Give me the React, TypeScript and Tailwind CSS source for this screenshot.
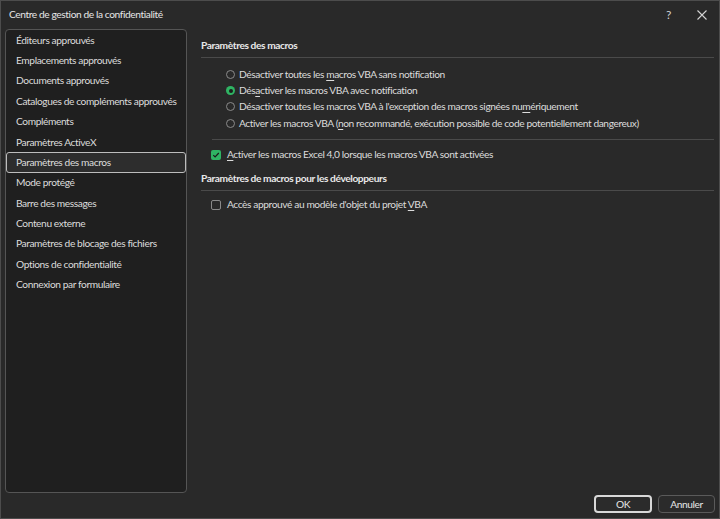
import React from "react";

const sections = [
  "Éditeurs approuvés",
  "Emplacements approuvés",
  "Documents approuvés",
  "Catalogues de compléments approuvés",
  "Compléments",
  "Paramètres ActiveX",
  "Paramètres des macros",
  "Mode protégé",
  "Barre des messages",
  "Contenu externe",
  "Paramètres de blocage des fichiers",
  "Options de confidentialité",
  "Connexion par formulaire",
];

const Radio: React.FC<{ checked?: boolean; children: React.ReactNode }> = ({ checked, children }) => (
  <div className="flex items-center h-[16.4px]">
    {checked ? (
      <span className="w-[9px] h-[9px] rounded-full bg-[#2fb463] flex items-center justify-center">
        <span className="w-[4px] h-[4px] rounded-full bg-[#1c1c1c]" />
      </span>
    ) : (
      <span className="w-[9px] h-[9px] rounded-full border border-[#8a8a8a]" />
    )}
    <span className="ml-[4px]">{children}</span>
  </div>
);

const Check: React.FC<{ checked?: boolean; children: React.ReactNode }> = ({ checked, children }) => (
  <div className="flex items-center h-[16px]">
    {checked ? (
      <span className="w-[10px] h-[10px] rounded-[2px] bg-[#2fb463] flex items-center justify-center">
        <svg width="8" height="8" viewBox="0 0 8 8" fill="none">
          <path d="M1.3 4.2 L3.1 6 L6.8 2" stroke="#1a1a1a" strokeWidth="1.2" />
        </svg>
      </span>
    ) : (
      <span className="w-[10px] h-[10px] rounded-[2px] border border-[#8a8a8a]" />
    )}
    <span className="ml-[6px]">{children}</span>
  </div>
);

const U: React.FC<{ children: React.ReactNode }> = ({ children }) => (
  <span className="underline underline-offset-2">{children}</span>
);

export default function App() {
  return (
    <div
      className="w-[720px] h-[519px] bg-[#292929] border border-[#4c4c4c] flex flex-col text-[#dcdcdc] text-[10.2px] tracking-[-0.4px] whitespace-nowrap select-none"
      style={{ fontFamily: 'Lato, "Noto Sans", sans-serif' }}
    >
      {/* Barre de titre */}
      <div className="h-[28px] flex items-center justify-between pl-[8px] pr-[12px]">
        <span className="text-[#e6e6e6]">Centre de gestion de la confidentialité</span>
        <div className="flex items-center gap-[26px] text-[#cfcfcf]">
          <span className="text-[12px]">?</span>
          <svg width="10" height="10" viewBox="0 0 10 10">
            <path d="M0.5 0.5 L9.5 9.5 M9.5 0.5 L0.5 9.5" stroke="#d4d4d4" strokeWidth="1.1" />
          </svg>
        </div>
      </div>

      <div className="flex flex-1 min-h-0">
        {/* Liste des catégories */}
        <div className="ml-[4px] w-[182px] border border-[#555] rounded-[4px] bg-[#1f1f1f] flex flex-col">
          {sections.map((s) =>
            s === "Paramètres des macros" ? (
              <div
                key={s}
                className="h-[20.4px] flex items-center pl-[9px] border border-[#bdbdbd] rounded-[3px] bg-[#2d2d2d]"
              >
                {s}
              </div>
            ) : (
              <div key={s} className="h-[20.4px] flex items-center pl-[10px]">
                {s}
              </div>
            )
          )}
        </div>

        {/* Paramètres */}
        <div className="flex-1 ml-[14px] mr-[5px] pt-[9px] flex flex-col">
          <div className="font-bold text-[#e8e8e8] h-[14px] leading-[14px]">Paramètres des macros</div>
          <div className="mt-[5px] h-px bg-[#4a4a4a]" />
          <div className="ml-[25px] mt-[8px] flex flex-col">
            <Radio>
              Désactiver toutes les <U>m</U>acros VBA sans notification
            </Radio>
            <Radio checked>
              Dés<U>a</U>ctiver les macros VBA avec notification
            </Radio>
            <Radio>
              Désactiver toutes les macros VBA à l'exception des macros signées nu<U>m</U>ériquement
            </Radio>
            <Radio>
              Activer les macros VBA (<U>n</U>on recommandé, exécution possible de code potentiellement dangereux)
            </Radio>
          </div>
          <div className="ml-[11px] mt-[7px] h-px bg-[#4a4a4a]" />
          <div className="ml-[10px] mt-[7px]">
            <Check checked>
              <U>A</U>ctiver les macros Excel 4,0 lorsque les macros VBA sont activées
            </Check>
          </div>
          <div className="font-bold text-[#e8e8e8] h-[14px] leading-[14px] mt-[8px]">
            Paramètres de macros pour les développeurs
          </div>
          <div className="mt-[5px] h-px bg-[#4a4a4a]" />
          <div className="ml-[10px] mt-[6px]">
            <Check>
              Accès approuvé au modèle d'objet du projet <U>V</U>BA
            </Check>
          </div>
        </div>
      </div>

      {/* Boutons */}
      <div className="h-[25px] flex items-start justify-end gap-[6px] pt-[2px] pr-[4px]">
        <button className="w-[58px] h-[18px] rounded-[4px] border-2 border-[#d8d8d8] bg-[#2b2b2b] text-[#e6e6e6] leading-none">
          OK
        </button>
        <button className="w-[57px] h-[18px] rounded-[4px] border border-[#5a5a5a] bg-[#2b2b2b] text-[#e6e6e6] leading-none">
          Annuler
        </button>
      </div>
    </div>
  );
}
